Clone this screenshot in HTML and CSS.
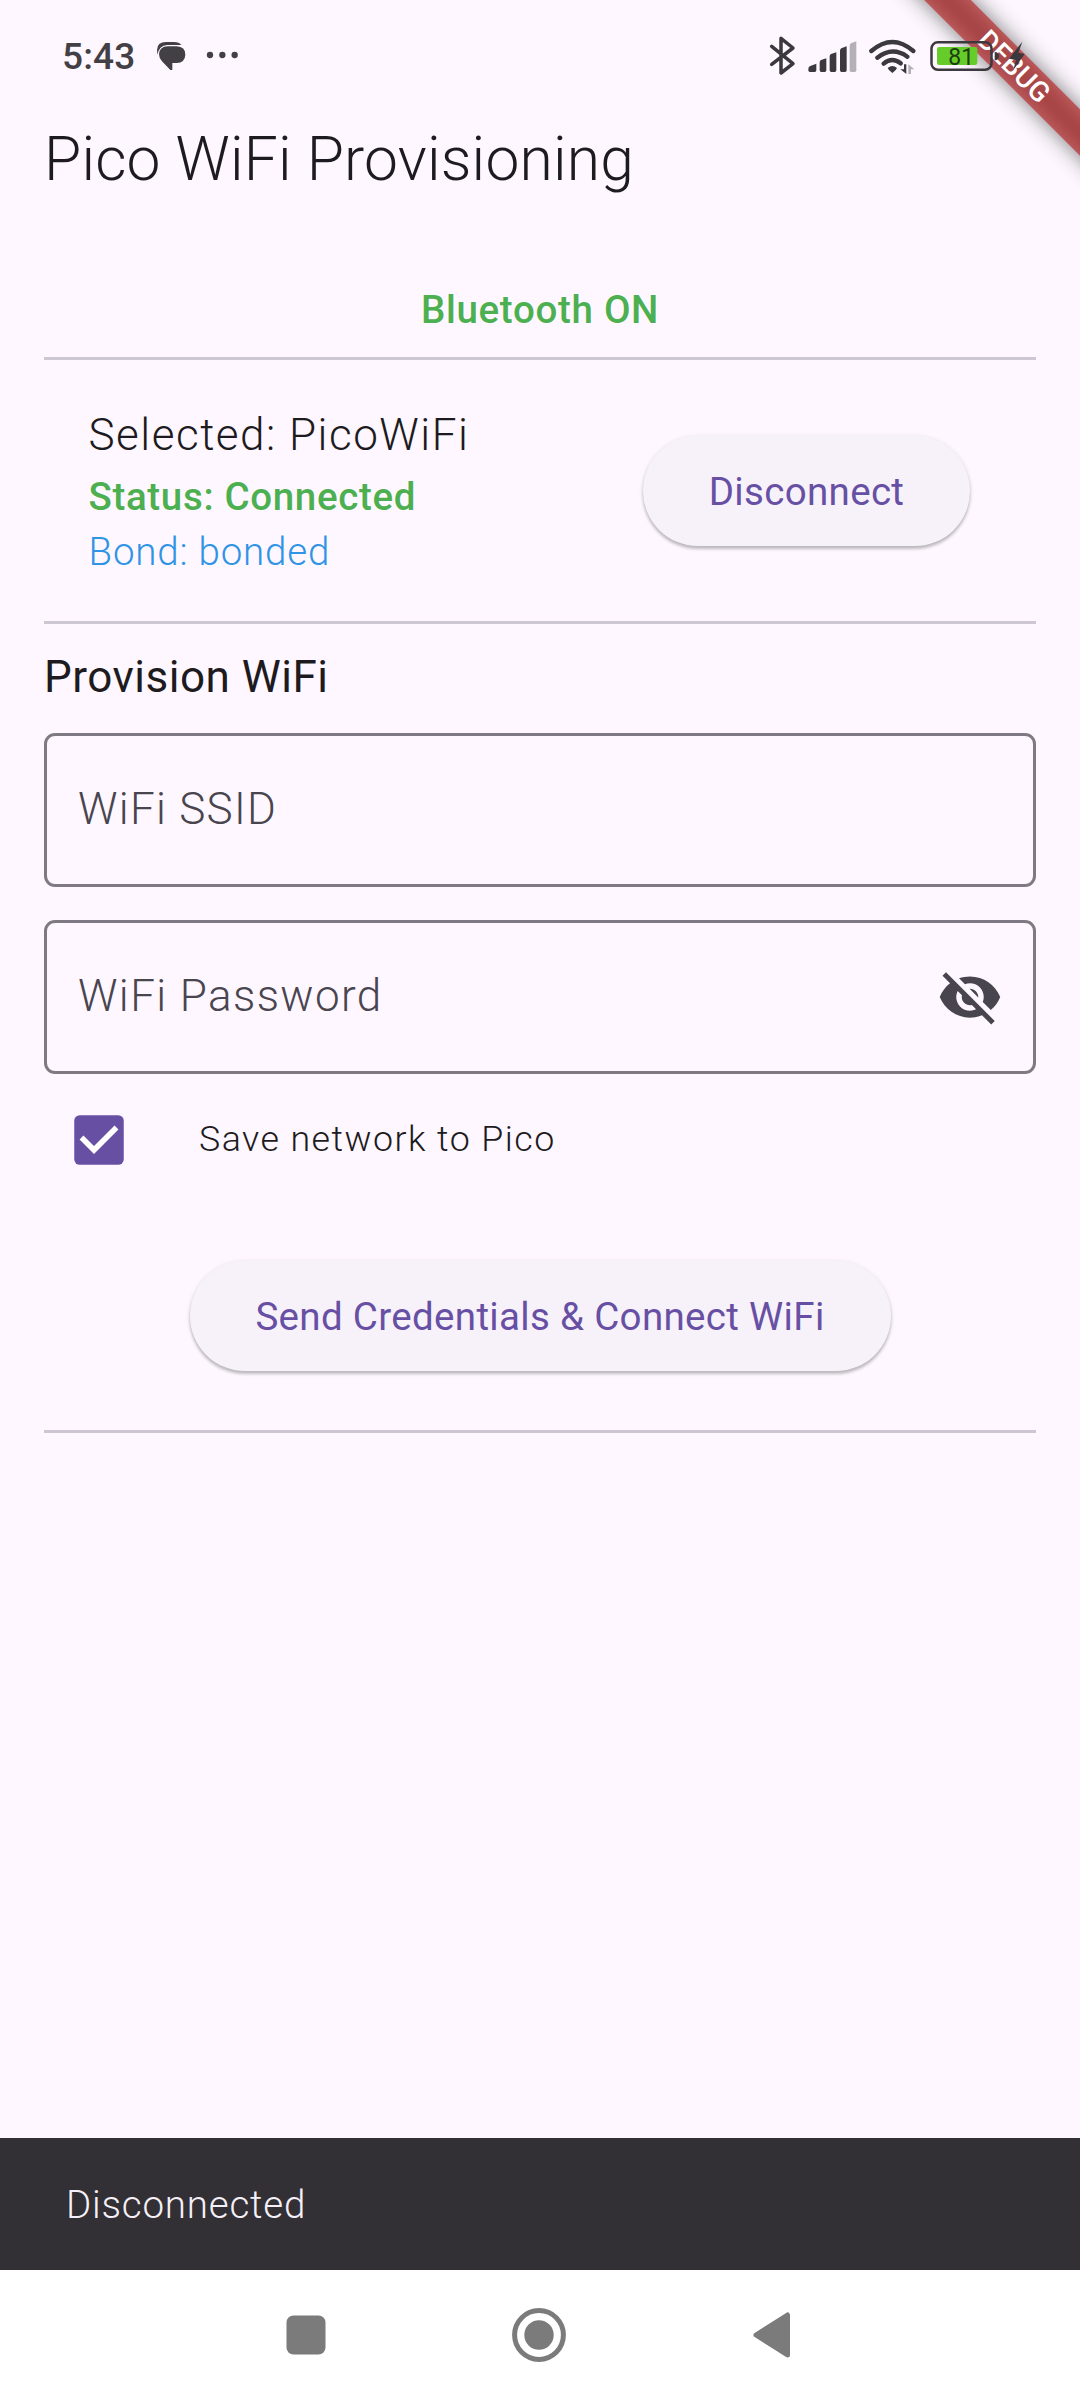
FILE: index.html
```
<!DOCTYPE html>
<html lang="en">
<head>
<meta charset="utf-8">
<title>Pico WiFi Provisioning</title>
<link rel="stylesheet" href="styles.css">
</head>
<body>
<div class="screen">
  <div class="status-bar">
    <span class="clock">5:43</span>
    <svg class="notifications" width="85" height="32" viewBox="345 60 255 96">
      <path d="M353 104Q344 66 378 66H402Q418 66 424 75H382Q356 77 353 104Z"/>
      <path d="M383 79H410Q436 80 436 104Q435 128 410 129H397V150H391L366 124Q357 115 357 103Q358 80 383 79Z"/>
      <circle cx="510" cy="105" r="9.5"/><circle cx="547" cy="105" r="9.5"/><circle cx="584" cy="105" r="9.5"/>
    </svg>
    <svg class="system-icons" width="264" height="44" viewBox="80 96 792 132">
      <path class="line" d="M94 136L158 188L122 216V112L158 141L94 190" stroke-width="10.5"/>
      <path d="M208 196L228 188V208Q228 213 223 213H209Q204 213 204 208V204Q204 199 208 196ZM238 184Q238 179 242 177L258 172V208Q258 213 253 213H243Q238 213 238 208ZM268 166Q268 161 272 159L288 154V208Q288 213 283 213H273Q268 213 268 208ZM299 149Q299 144 303 142L319 136V208Q319 213 314 213H304Q299 213 299 208Z"/>
      <path class="faint" d="M328 134Q328 129 332 127L348 121V208Q348 213 343 213H333Q328 213 328 208Z"/>
      <path class="line" d="M393 150Q456 96 519 150M411 170Q456 135 501 167M430 188Q455 167 481 187" stroke-width="13"/>
      <path d="M442 201Q456 189 470 201Q468 208 456 216Q444 208 442 201Z"/>
      <path d="M491 190H498V219L480 205H491Z"/>
      <path class="faint" d="M504 190L522 205H512V219H504Z"/>
      <rect class="fill" x="590" y="138" width="121" height="54" rx="7"/>
      <rect class="line" x="573.5" y="123.500" width="180" height="83" rx="19" stroke-width="7.500"/>
      <path d="M763 153Q776 154 776 165Q776 177 763 178Z"/>
      <path d="M846 122L806 173L827 177L819 207L853 159L834 155Z"/>
      <text class="level" x="624" y="192">81</text>
    </svg>
  </div>
  <div class="banner"><div class="ribbon"><span class="ribbon-text">DEBUG</span></div></div>

  <header class="app-bar"><h1 class="title">Pico WiFi Provisioning</h1></header>

  <main class="content">
    <p class="adapter">Bluetooth ON</p>
    <hr class="divider">
    <section class="device">
      <div class="device-info">
        <p class="device-name">Selected: PicoWiFi</p>
        <p class="device-status">Status: Connected</p>
        <p class="device-bond">Bond: bonded</p>
      </div>
      <button class="button disconnect">Disconnect</button>
    </section>
    <hr class="divider">
    <h2 class="section-title">Provision WiFi</h2>
    <div class="field"><span class="label ssid">WiFi SSID</span></div>
    <div class="field">
      <span class="label">WiFi Password</span>
      <svg class="eye" width="66" height="66" viewBox="0 0 24 24"><path d="M12 7c2.760 0 5 2.240 5 5 0 .650-.130 1.260-.360 1.830l2.920 2.920c1.510-1.260 2.700-2.890 3.430-4.750-1.730-4.390-6-7.500-11-7.500-1.400 0-2.740.250-3.980.700l2.160 2.160C10.740 7.130 11.350 7 12 7zM2 4.270l2.280 2.280.460.460C3.080 8.300 1.780 10.020 1 12c1.730 4.390 6 7.500 11 7.500 1.550 0 3.030-.300 4.380-.840l.420.420L19.730 22 21 20.730 3.270 3 2 4.270zM7.530 9.800l1.550 1.550c-.050.210-.080.430-.080.650 0 1.660 1.340 3 3 3 .220 0 .440-.030.650-.080l1.550 1.550c-.670.330-1.410.530-2.200.530-2.760 0-5-2.240-5-5 0-.790.200-1.530.530-2.200zm4.310-.780l3.150 3.150.020-.160c0-1.660-1.340-3-3-3l-.170.010z"/></svg>
    </div>
    <label class="save">
      <svg class="checkbox" width="50" height="50" viewBox="0 0 50 50"><rect x=".25" y=".25" width="49.500" height="49.500" rx="5.500"/><path d="M7.500 22.500L20 35L42.500 12.500"/></svg>
      <span class="save-text">Save network to Pico</span>
    </label>
    <button class="button send">Send Credentials &amp; Connect WiFi</button>
    <hr class="divider">
  </main>

  <div class="snackbar">Disconnected</div>
  <nav class="nav-bar">
    <svg width="40" height="40" viewBox="0 0 40 40"><rect x=".5" y=".5" width="39" height="39" rx="7"/></svg>
    <svg width="54" height="54" viewBox="0 0 54 54"><circle cx="27" cy="27" r="24.400" fill="none" stroke="#7b7b7b" stroke-width="5"/><circle cx="27" cy="27" r="14.700"/></svg>
    <svg width="38" height="48" viewBox="0 0 38 48"><path d="M4 24L35.500 4V44Z" stroke="#7b7b7b" stroke-width="5" stroke-linejoin="round"/></svg>
  </nav>
</div>
</body>
</html>
```
FILE: styles.css
```
* { box-sizing: border-box; }
body { margin: 0; background: #fef7ff; }
h1, h2, p { margin: 0; font-weight: inherit; }

.screen {
  position: relative;
  display: flex;
  flex-direction: column;
  width: 1080px;
  height: 2400px;
  overflow: hidden;
  background: #fef7ff;
  color: #1d1b20;
  font-family: Roboto, sans-serif;
}

.status-bar {
  position: relative;
  z-index: 2;
  display: flex;
  align-items: center;
  height: 82px;
  padding: 30px 49px 0 62px;
  color: #434045;
  fill: #434045;
}
.clock { margin-top: 1px; font-size: 37px; font-weight: 500; line-height: 51px; letter-spacing: .15px; }
.notifications { margin-left: 20px; }
.system-icons { margin-left: auto; margin-top: -2px; fill: #3b383e; }
.line { fill: none; stroke: #3b383e; stroke-linecap: round; stroke-linejoin: round; }
.faint { fill: #b5b0b7; }
.fill { fill: #66cc29; }
.level { font-size: 69px; fill: #1d3c12; }

/* Corner ribbon, drawn over the page and clipped to the corner */
.banner {
  position: absolute;
  top: 0;
  right: 0;
  z-index: 1;
  width: 260px;
  height: 260px;
  overflow: hidden;
}
.ribbon {
  position: absolute;
  top: 49.5px;
  left: -6px;
  width: 400px;
  height: 33px;
  transform: rotate(45deg);
}
.ribbon::before {
  content: "";
  position: absolute;
  inset: 0;
  background: rgba(0, 0, 0, .5);
  filter: blur(11px);
}
.ribbon::after {
  content: "";
  position: absolute;
  inset: 0;
  background: rgba(183, 28, 28, .627);
}
.ribbon-text {
  position: relative;
  z-index: 1;
  display: block;
  color: #fff;
  font-size: 28px;
  font-weight: 500;
  line-height: 33px;
  text-align: center;
}

.app-bar { height: 154px; padding-left: 44px; }
.title { font-size: 60.5px; font-weight: 300; line-height: 156px; letter-spacing: .18px; }

.content {
  display: flex;
  flex-direction: column;
  flex: 1;
  padding: 46px 44px 0;
}
.adapter {
  color: #4caf50;
  font-size: 38.5px;
  font-weight: 500;
  line-height: 55px;
  letter-spacing: .7px;
  text-align: center;
}
.divider { width: 100%; height: 3px; margin: 20px 0 0; border: 0; background: #cdc7d3; }

.device {
  display: flex;
  align-items: center;
  justify-content: space-between;
  padding: 42px 66px 22px 44px;
}
.device-info { display: flex; flex-direction: column; padding-left: .5px; }
.device-name { margin-bottom: 1px; font-size: 44px; font-weight: 300; line-height: 66px; letter-spacing: 1.5px; }
.device-status { color: #4caf50; font-size: 38.5px; font-weight: 500; line-height: 55px; letter-spacing: .66px; }
.device-bond { color: #2f93e6; font-size: 38.5px; font-weight: 300; line-height: 55px; letter-spacing: .8px; }

.button {
  height: 110px;
  padding: 0;
  border: 0;
  border-radius: 55px;
  background: #f7f2fa;
  box-shadow: 0 3px 3px rgba(0, 0, 0, .2), 0 1px 5px rgba(0, 0, 0, .12);
  color: #6750a4;
  font: 400 38.5px/110px Roboto, sans-serif;
  letter-spacing: .33px;
}
.disconnect { width: 327px; padding-top: 2px; line-height: 108px; }
.send { align-self: center; width: 701px; margin: 96px 0 39px; padding-top: 2px; line-height: 108px; }

.section-title { margin-top: 20px; font-size: 44px; font-weight: 400; line-height: 66px; letter-spacing: .5px; }
.field {
  display: flex;
  align-items: center;
  justify-content: space-between;
  height: 154px;
  margin-top: 33px;
  padding: 0 30px 0 31px;
  border: 3px solid #7f7983;
  border-radius: 11px;
}
.section-title + .field { margin-top: 23px; }
.label { margin-top: -2px; color: #49454f; font-size: 44px; font-weight: 300; line-height: 66px; letter-spacing: 1.4px; }
.ssid { letter-spacing: 1.3px; }
.eye { fill: #49454f; }

.save { display: flex; align-items: center; height: 50px; margin-top: 41px; padding-left: 30px; }
.checkbox { fill: #6750a4; }
.checkbox path { fill: none; stroke: #fff; stroke-width: 5.500px; }
.save-text { margin: -3px 0 0 75px; font-size: 35.75px; font-weight: 300; line-height: 50px; letter-spacing: 1.45px; }

.snackbar {
  height: 132px;
  padding-left: 66px;
  background: #322f35;
  color: #f5eff7;
  font-size: 38.5px;
  font-weight: 300;
  line-height: 133px;
  letter-spacing: .8px;
}
.nav-bar {
  display: flex;
  align-items: center;
  gap: 186px;
  height: 130px;
  padding-left: 286px;
  background: #fff;
  fill: #7b7b7b;
}
```
